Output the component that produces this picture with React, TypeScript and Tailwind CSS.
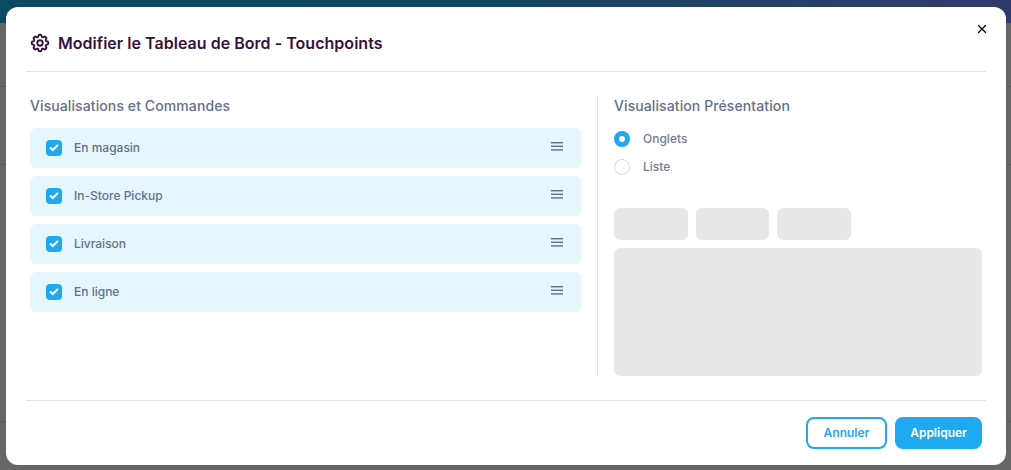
import { Check, X } from 'lucide-react';
import { HiOutlineCog8Tooth } from 'react-icons/hi2';

const items = ['En magasin', 'In-Store Pickup', 'Livraison', 'En ligne'];

function DragHandle() {
  return (
    <svg className="-mt-1 ml-auto text-[#64708c]" width="12" height="9" viewBox="0 0 12 9" fill="currentColor">
      <rect x="0" y="0" width="12" height="1.4" />
      <rect x="0" y="3.6" width="12" height="1.4" />
      <rect x="0" y="7.2" width="12" height="1.4" />
    </svg>
  );
}

function ItemRow({ label }: { label: string }) {
  return (
    <div className="flex h-10 items-center rounded-md bg-[#e6f6ff] pl-4 pr-[18px]">
      <span className="flex h-4 w-4 items-center justify-center rounded bg-[#1fa9f0]">
        <Check className="h-[10px] w-[10px] text-white" strokeWidth={5} />
      </span>
      <span className="ml-3 text-xs font-medium text-[#64708c]">{label}</span>
      <DragHandle />
    </div>
  );
}

export default function App() {
  return (
    <div className="relative h-[470px] w-[1011px] overflow-hidden bg-[#666666] font-['Inter',sans-serif]">
      {/* page behind the overlay */}
      <div className="h-[23px] bg-gradient-to-r from-[#0b4a63] via-[#11465f] to-[#2f3a6b]" />
      <div className="h-[64px] border-b border-[#5a5a5a]" />
      <div className="h-[78px] border-b border-[#5a5a5a]" />
      <div className="h-[257px] border-b border-[#5a5a5a]" />

      {/* modal */}
      <div className="absolute left-[6px] top-[7px] flex h-[458px] w-[1000px] flex-col rounded-xl bg-white px-5">
        <div className="relative flex h-[65px] shrink-0 items-center border-b border-[#e5e5e8] pl-[3px] pt-[8px]">
          <HiOutlineCog8Tooth className="h-[22px] w-[22px] text-[#38113f]" strokeWidth={2} />
          <h2 className="ml-[7px] text-base font-semibold tracking-[0.03px] text-[#38113f]">Modifier le Tableau de Bord - Touchpoints</h2>
          <X className="absolute right-[-3px] top-[15px] h-[14px] w-[14px] text-black" strokeWidth={2.2} />
        </div>

        <div className="flex min-h-0 flex-1 border-b border-[#e5e5e8] pt-6">
          <div className="w-[571px] shrink-0 pl-1 pr-4">
            <h3 className="text-sm font-medium leading-5 tracking-[0.1px] text-[#64708c]">Visualisations et Commandes</h3>
            <div className="mt-3 flex flex-col gap-2">
              {items.map((item) => (
                <ItemRow key={item} label={item} />
              ))}
            </div>
          </div>

          <div className="mb-6 flex flex-1 flex-col border-l border-[#e5e5e8] pl-4 pr-1">
            <h3 className="text-sm font-medium leading-5 tracking-[0.1px] text-[#64708c]">Visualisation Présentation</h3>
            <div className="mt-[15px] flex flex-col gap-3">
              <div className="flex h-4 items-center gap-[13px]">
                <span className="flex h-4 w-4 items-center justify-center rounded-full bg-[#1fa9f0]">
                  <span className="h-[6px] w-[6px] rounded-full bg-white" />
                </span>
                <span className="text-xs font-medium text-[#757d92]">Onglets</span>
              </div>
              <div className="flex h-4 items-center gap-[13px]">
                <span className="h-4 w-4 rounded-full border border-[#d3d5dc] bg-white" />
                <span className="text-xs font-medium text-[#757d92]">Liste</span>
              </div>
            </div>
            <div className="mt-[33px] flex gap-2">
              <div className="h-8 w-[74px] rounded-md bg-[#e8e8e8]" />
              <div className="h-8 w-[73px] rounded-md bg-[#e8e8e8]" />
              <div className="h-8 w-[74px] rounded-md bg-[#e8e8e8]" />
            </div>
            <div className="mt-2 flex-1 rounded-md bg-[#e8e8e8]" />
          </div>
        </div>

        <div className="flex h-[64px] shrink-0 justify-end gap-2 pr-1 pt-4">
          <button className="h-8 w-[81px] rounded-lg border-2 border-[#1fa9f0] bg-white text-xs font-semibold text-[#1fa9f0]">Annuler</button>
          <button className="h-8 w-[87px] rounded-lg bg-[#1fa9f0] text-xs font-semibold text-white">Appliquer</button>
        </div>
      </div>
    </div>
  );
}
